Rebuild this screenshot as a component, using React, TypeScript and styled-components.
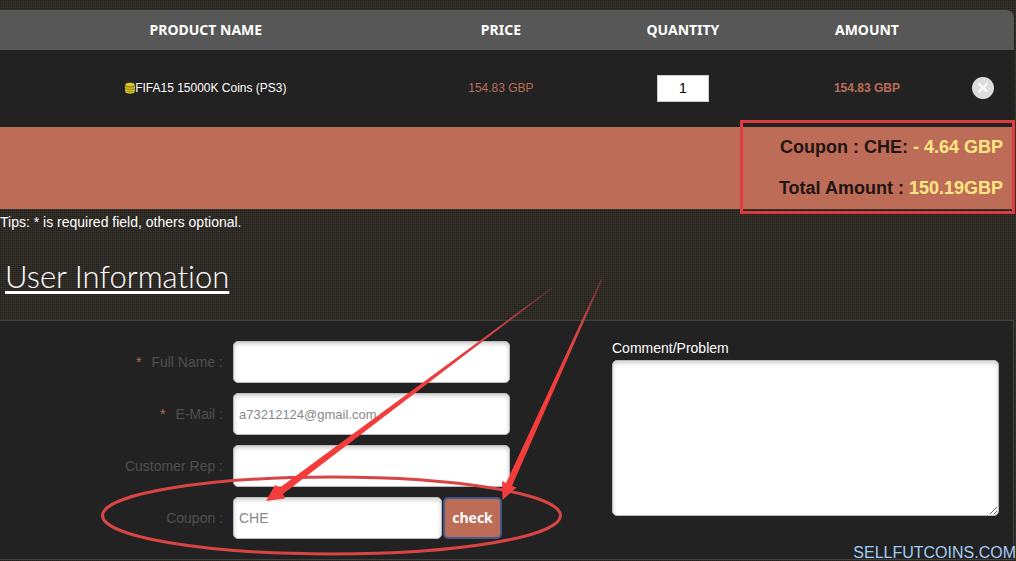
import React from 'react';
import styled, { createGlobalStyle } from 'styled-components';

const Global = createGlobalStyle`
  * { box-sizing: border-box; }
  body {
    margin: 0;
    overflow: hidden;
    color: #fff;
    font: 14px/20px "Liberation Sans", Arial, sans-serif;
    background:
      repeating-linear-gradient(90deg, rgba(20, 18, 16, 0.25) 0 1px, transparent 1px 2px),
      repeating-linear-gradient(#2a2722 0 1px, #3a362f 1px 2px);
  }
`;

const Page = styled.main`
  position: relative;
  padding: 10px 2px 0 0;
`;

const Cart = styled.table`
  width: 100%;
  table-layout: fixed;
  border-spacing: 0;
  background: #222;
  border-radius: 0 8px 0 0;
`;

const Head = styled.th`
  width: ${(p: { $w: string }) => p.$w};
  height: 40px;
  padding: 0;
  background: #575757;
  font: 700 14px/20px "Noto Sans", sans-serif;
  &:last-child { border-radius: 0 8px 0 0; }
`;

const Cell = styled.td<{ $accent?: boolean; $bold?: boolean }>`
  height: 77px;
  padding: 0 0 1px;
  text-align: center;
  font-size: 12px;
  font-weight: ${(p) => (p.$bold ? 700 : 400)};
  color: ${(p) => (p.$accent ? '#bd6c57' : '#fff')};
  &:last-child { padding-right: 7px; }
`;

const Product = styled.div`
  display: flex;
  justify-content: center;
  align-items: center;
`;

const Quantity = styled.input`
  display: block;
  width: 52px;
  height: 27px;
  margin: 0 auto;
  padding: 0;
  border: 1px solid #ccc;
  text-align: center;
  font: 14px "Liberation Sans", sans-serif;
`;

const Remove = styled.button`
  display: block;
  width: 22px;
  height: 22px;
  margin: 0 auto;
  padding: 0;
  border: 0;
  border-radius: 50%;
  background: #ddd;
  svg { display: block; }
`;

const TotalCell = styled.td`
  position: relative;
  height: 82px;
  padding: 0 11px 0 0;
  background: #bd6c57;
  color: #231414;
  text-align: right;
  font: 700 18px/41px "Liberation Sans", sans-serif;
  p { margin: 0; }
  strong { color: #ffe781; }
`;

const Highlight = styled.div`
  position: absolute;
  top: -7px;
  right: -1px;
  width: 275px;
  height: 94px;
  border: 3px solid #e03c40;
`;

const Tips = styled.p`
  margin: 3px 0 0;
`;

const Title = styled.h2`
  margin: 21px 0 21px 5px;
  font: 300 31px/46px Lato, sans-serif;
  font-variant-ligatures: none;
  text-decoration: underline;
  text-decoration-thickness: 3px;
  text-underline-offset: 3px;
`;

const Panel = styled.form`
  display: flex;
  gap: 102px;
  padding: 20px 14px 20px 0;
  background: #222;
  border: 1px solid #45423d;
  border-left: 0;
`;

const Fields = styled.div`
  display: grid;
  grid-template-columns: 223px 277px;
  gap: 10px;
  align-items: center;
`;

const Label = styled.label`
  color: #505050;
  text-align: right;
`;

const Required = styled.span`
  margin-right: 10px;
  color: #bd6c57;
`;

const Box = styled.input`
  width: 100%;
  min-width: 0;
  height: 42px;
  padding: 0 5px;
  border: 1px solid #bbb;
  border-radius: 5px;
  background: #fff;
  box-shadow: inset 0 2px 4px #ccc;
  color: #888;
  font: 14px "Liberation Sans", sans-serif;
`;

const EmailBox = styled(Box)`
  font-size: 13px;
`;

const CouponRow = styled.div`
  display: flex;
  gap: 1px;
  padding-right: 8px;
`;

const Check = styled.button`
  flex: none;
  width: 59px;
  height: 42px;
  padding: 0;
  border: 2px solid #40598f;
  border-radius: 5px;
  background: #bd6c57;
  color: #fff;
  font: 700 14px/20px "Open Sans", sans-serif;
`;

const Comment = styled.div`
  flex: 1;
  display: flex;
  flex-direction: column;
  label { line-height: 14px; margin-bottom: 5px; }
`;

const Area = styled.textarea`
  width: 100%;
  height: 156px;
  border: 1px solid #bbb;
  border-radius: 5px;
  box-shadow: inset 0 2px 4px #ccc;
  resize: both;
`;

const Marks = styled.svg`
  position: absolute;
  left: 0;
  top: 0;
  pointer-events: none;
`;

const Watermark = styled.div`
  position: absolute;
  right: 0;
  bottom: -2px;
  color: #a4cdf4;
  font: 16px/18px "Liberation Sans", sans-serif;
`;

const Coins = () => (
  <svg width="10" height="12" viewBox="0 0 10 12" aria-hidden="true">
    <path d="M0 3v6.5C0 12 10 12 10 9.500V3z" fill="#a18a12" />
    <path d="M0 5c1 1.600 9 1.600 10 0M0 7.500c1 1.600 9 1.600 10 0M1 10c2 1.300 6 1.300 8 0" fill="none" stroke="#e5d23c" strokeWidth="1.100" />
    <ellipse cx="5" cy="2.500" rx="4.600" ry="1.800" fill="#e0cf40" stroke="#8d7a12" strokeWidth=".5" />
  </svg>
);

export default function App() {
  return (
    <Page>
      <Global />
      <Cart>
        <thead>
          <tr>
            <Head $w="40.6%">PRODUCT NAME</Head>
            <Head $w="17.6%">PRICE</Head>
            <Head $w="18.3%">QUANTITY</Head>
            <Head $w="18%">AMOUNT</Head>
            <Head $w="5.5%" aria-label="Remove" />
          </tr>
        </thead>
        <tbody>
          <tr>
            <Cell><Product><Coins />FIFA15 15000K Coins (PS3)</Product></Cell>
            <Cell $accent>154.83 GBP</Cell>
            <Cell><Quantity aria-label="Quantity" defaultValue="1" /></Cell>
            <Cell $accent $bold>154.83 GBP</Cell>
            <Cell>
              <Remove type="button" aria-label="Remove item">
                <svg width="22" height="22" viewBox="0 0 22 22">
                  <path d="M6.500 6.500l9 8.500M15.500 6.500l-9 8.500" stroke="#fff" strokeWidth="1.800" />
                </svg>
              </Remove>
            </Cell>
          </tr>
        </tbody>
        <tfoot>
          <tr>
            <TotalCell colSpan={5}>
              <p>Coupon : CHE: <strong>- 4.64 GBP</strong></p>
              <p>Total Amount : <strong>150.19GBP</strong></p>
              <Highlight />
            </TotalCell>
          </tr>
        </tfoot>
      </Cart>
      <Tips>Tips: * is required field, others optional.</Tips>
      <Title>User Information</Title>
      <Panel>
        <Fields>
          <Label htmlFor="name"><Required>*</Required>Full Name :</Label>
          <Box id="name" />
          <Label htmlFor="email"><Required>*</Required>E-Mail :</Label>
          <EmailBox id="email" defaultValue="a73212124@gmail.com" />
          <Label htmlFor="rep">Customer Rep :</Label>
          <Box id="rep" />
          <Label htmlFor="coupon">Coupon :</Label>
          <CouponRow>
            <Box id="coupon" defaultValue="CHE" />
            <Check type="button">check</Check>
          </CouponRow>
        </Fields>
        <Comment>
          <label htmlFor="comment">Comment/Problem</label>
          <Area id="comment" />
        </Comment>
      </Panel>
      <Marks width="620" height="561" viewBox="0 0 620 561" aria-hidden="true">
        <defs>
          <linearGradient id="a" gradientUnits="userSpaceOnUse" x1="552" y1="288" x2="420" y2="386">
            <stop offset="0" stopColor="#c04040" stopOpacity=".4" />
            <stop offset=".4" stopColor="#d24444" />
            <stop offset="1" stopColor="#f43c3c" />
          </linearGradient>
          <linearGradient id="b" gradientUnits="userSpaceOnUse" x1="602" y1="279" x2="550" y2="392">
            <stop offset="0" stopColor="#c04040" stopOpacity=".4" />
            <stop offset=".4" stopColor="#d24444" />
            <stop offset="1" stopColor="#f43c3c" />
          </linearGradient>
        </defs>
        <ellipse cx="331.500" cy="515.500" rx="229" ry="38.500" fill="none" stroke="#d94545" strokeWidth="3" />
        <path d="M266 501L275 485L280 487.500L552 287.500L552 288.500L283 494L285 498.500Z" fill="url(#a)" />
        <path d="M502.500 500L502 481L506 483L601 279L602 280L512 486L516.500 487.500Z" fill="url(#b)" />
      </Marks>
      <Watermark>SELLFUTCOINS.COM</Watermark>
    </Page>
  );
}
